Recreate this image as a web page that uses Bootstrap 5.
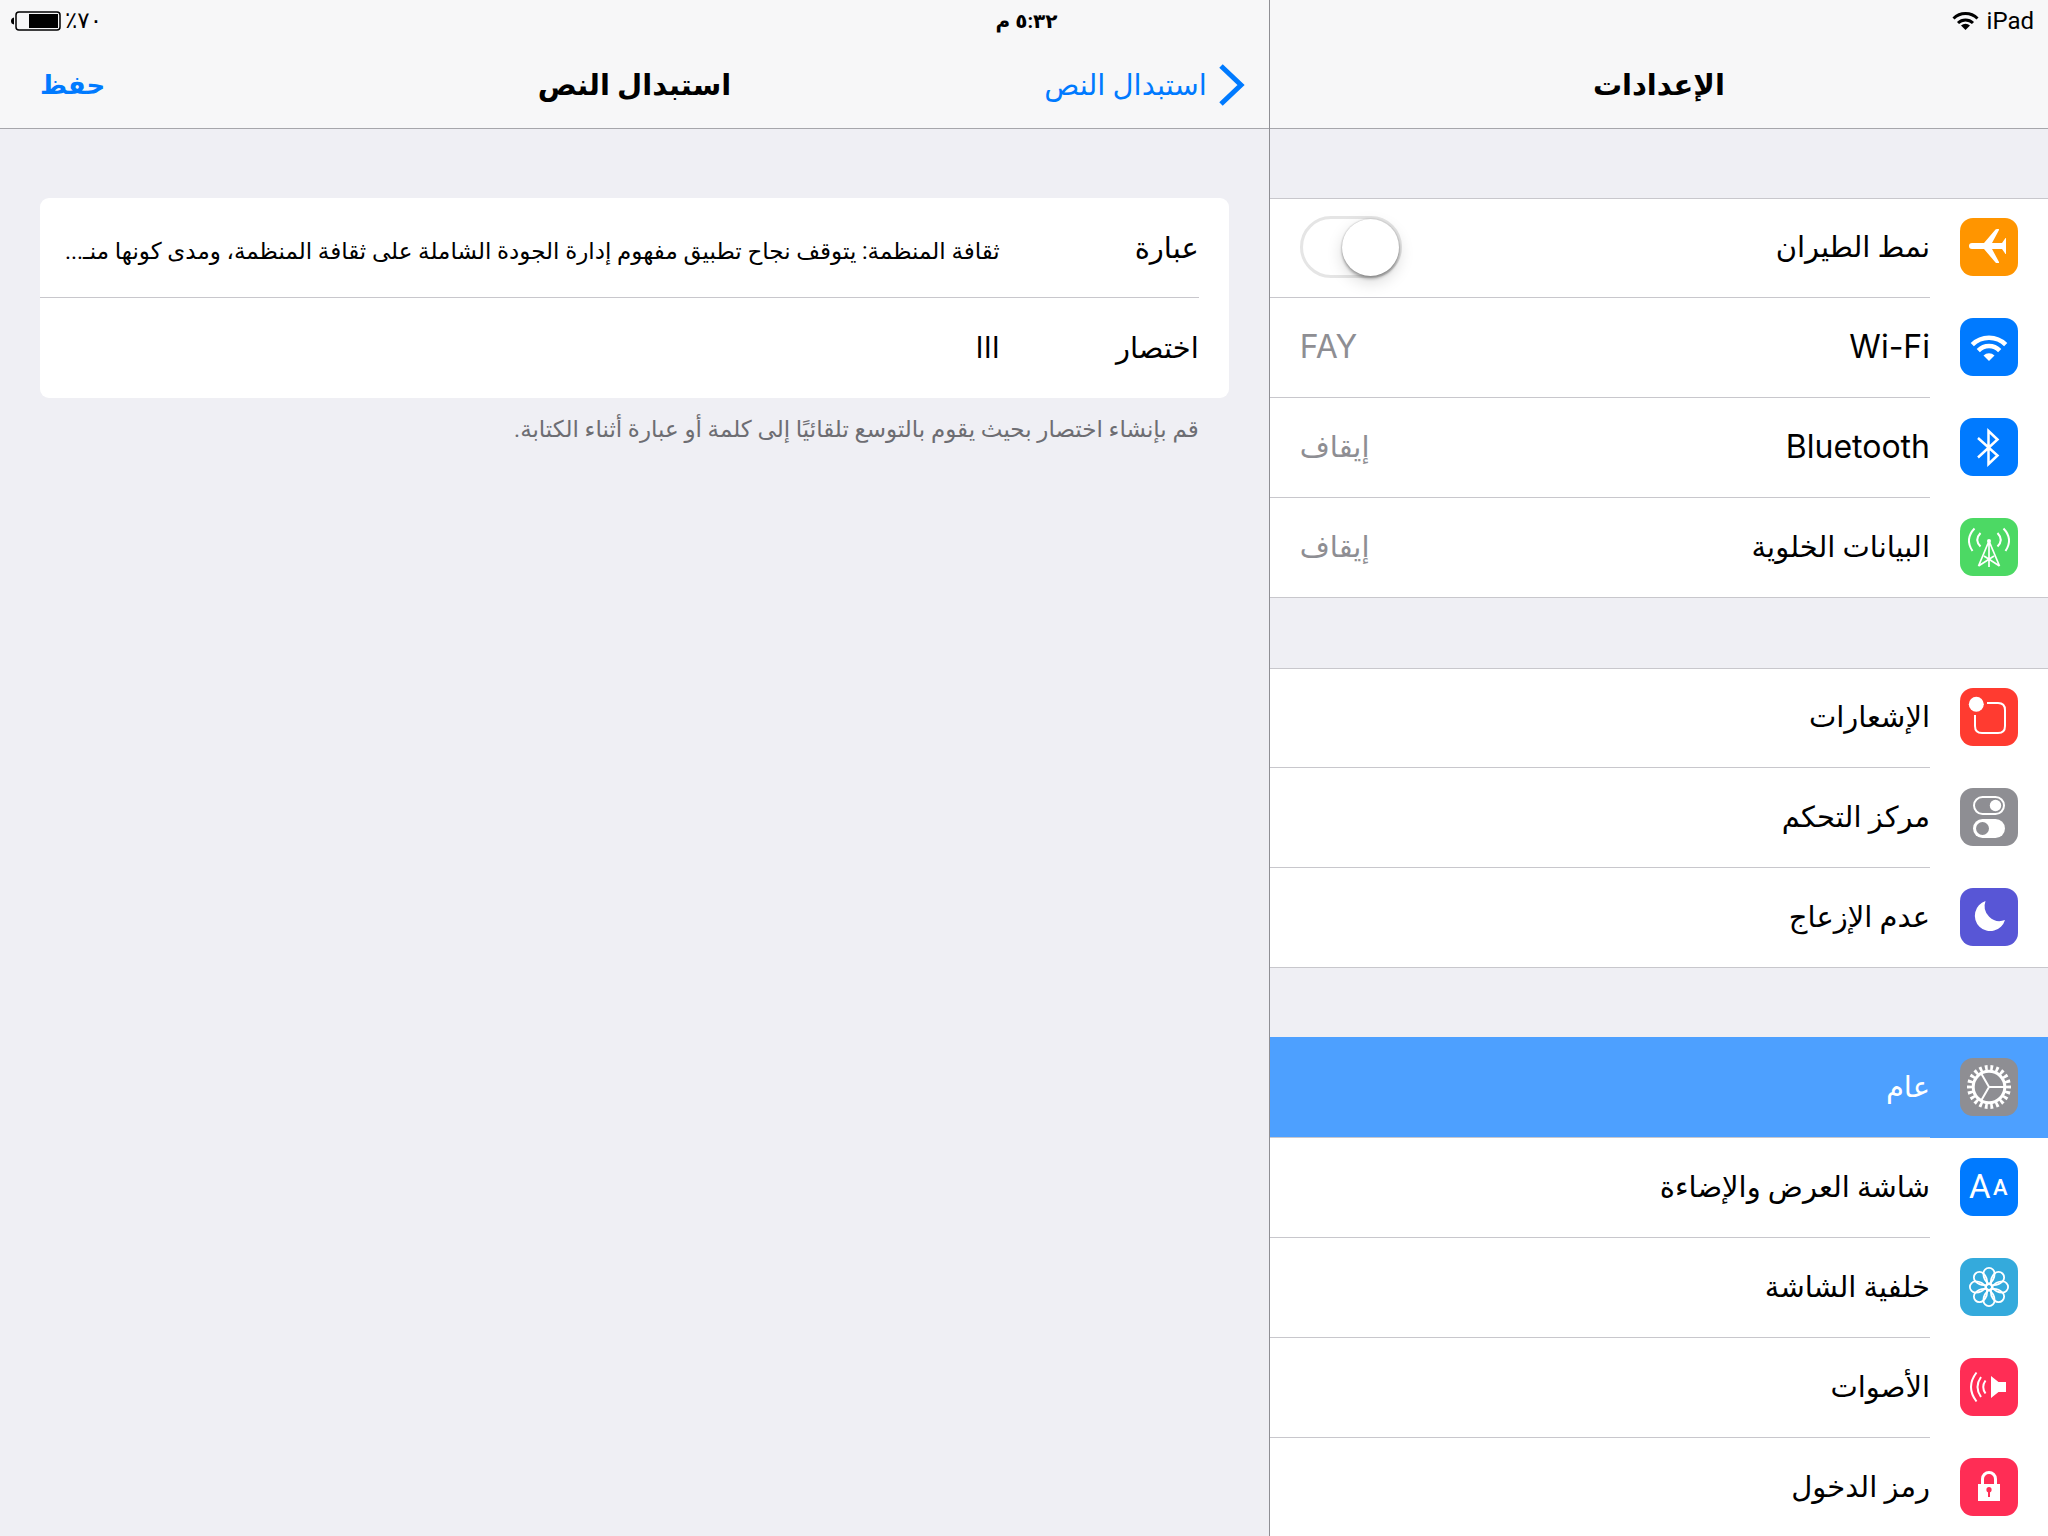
<!DOCTYPE html>
<html lang="ar" dir="rtl">
<head>
<meta charset="utf-8">
<meta name="viewport" content="width=device-width, initial-scale=1">
<title>استبدال النص</title>
<link href="https://cdn.jsdelivr.net/npm/bootstrap@5.3.0/dist/css/bootstrap.min.css" rel="stylesheet">
<style>
:root{--line:#c8c7cc;--tint:#007aff;--bar:#f7f7f8;--edge:#a6a6ab}
body{font-family:Roboto,"DejaVu Sans",sans-serif;font-size:29px;line-height:40px;color:#000;background:#efeff4}
a{text-decoration:none;color:inherit}
.latin{font-family:Inter,"DejaVu Sans",sans-serif;font-size:32px}
.status-bar{height:42px;padding:0 14px 0 11px;font-size:23px;line-height:42px;z-index:5;pointer-events:none}
.status-bar strong{font-size:20px;padding-left:8px}
.status-bar .carrier{font-size:24px}
.status-bar .part{flex:1 1 0}
.sidebar{flex:0 0 38%;min-width:0}
.detail{min-width:0;border-right:1px solid #8f8f94}
.top-bar{height:129px;flex:none;padding:46px 24px 4px;background:var(--bar);border-bottom:1px solid var(--edge)}
.top-bar h1{font-size:29px;line-height:40px;font-weight:700}
.top-bar .side{flex:1 1 0;color:var(--tint)}
.top-bar .side a{gap:12px}
.top-bar .btn{color:var(--tint);font-size:26px;line-height:40px}
.save{padding:0 16px!important}
.scroller{overflow-y:auto;scrollbar-width:none;padding-top:69px}
.scroller::-webkit-scrollbar{display:none}
.group{background:#fff;border-bottom:1px solid var(--line);margin-bottom:70px;box-shadow:inset 0 1px var(--line)}
.setting{height:100px;padding-right:30px;gap:30px}
.setting:last-child{height:99px}
.tile{width:58px;height:58px;margin-top:20px;border-radius:13px;flex:none}
.tile svg{display:block}
.body-cell{padding:0 0 1px 30px;border-bottom:1px solid var(--line)}
.setting:last-child .body-cell{border-bottom:0}
.value{color:#8e8e93}
.chosen{background:#4da0ff;color:#fff;box-shadow:0 -1px #4da0ff}
.form-check-input.flip{width:102px;height:62px;margin:0;border:3px solid #e5e5e5;border-radius:31px;background:#fff;display:flex;flex:none}
.flip::before{content:"";width:57px;height:57px;border-radius:50%;background:#fff;box-shadow:0 0 2px rgba(0,0,0,.3),0 3px 3px rgba(0,0,0,.25),0 6px 16px rgba(0,0,0,.15)}
.form-wrap{padding:69px 40px 0}
.sheet{background:#fff;border-radius:9px;padding-right:30px}
.field{height:100px}
.field + .field{box-shadow:0 -1px var(--line)}
.field label{width:199px;flex:none}
.field input{border:0;outline:0;background:none;padding:0 0 0 20px;min-width:0;color:#000;font-size:29px;line-height:40px;text-overflow:ellipsis}
.field .long-text{font-size:23px;padding-top:8px}
.hint{font-size:23px;line-height:32px;color:#6d6d72;padding:16px 30px}
</style>
</head>
<body>
<div class="vh-100 d-flex overflow-hidden position-relative">
  <div class="status-bar d-flex align-items-center position-absolute top-0 start-0 end-0">
    <div class="part d-flex align-items-center gap-2 carrier"><span>iPad</span>
      <svg width="27" height="20" viewBox="0 0 27 20" fill="none" stroke="#000" stroke-width="3"><path d="M1.5 7.500A17 17 0 0 1 25.500 7.500M6 12A11 11 0 0 1 21 12"/><path d="M13.500 19 9 14.500A7 7 0 0 1 18 14.500Z" fill="#000" stroke="none"/></svg></div>
    <strong>٥:٣٢ م</strong>
    <div class="part d-flex align-items-center justify-content-end gap-1"><span dir="ltr">٪٧٠</span>
      <svg width="50" height="20" viewBox="0 0 50 20"><rect x="5" y="1" width="44" height="18" rx="3" fill="none" stroke="#000" stroke-width="1.500"/><path d="M3 6.500V13.500Q0 13 0 10T3 6.500Z"/><rect x="18" y="3" width="29" height="14"/></svg></div>
  </div>

  <aside class="sidebar d-flex flex-column">
    <header class="top-bar d-flex align-items-center justify-content-center"><h1 class="m-0">الإعدادات</h1></header>
    <nav class="scroller flex-fill">
      <div class="group">
        <div class="setting d-flex"><span class="tile" style="background:#ff9500"><svg width="58" height="58" fill="#fff"><path d="M12 25H24L35.500 11.500Q36 11 37 11H38.500Q39.300 11 39 12L32 25H42L45.500 20H46V36H45.500L42 31H32L39 44Q39.300 45 38.500 45H37Q36 45 35.500 44.500L24 31H12A3 3 0 0 1 12 25Z"/></svg></span>
          <div class="body-cell flex-fill d-flex align-items-center justify-content-between"><label for="air">نمط الطيران</label><input class="form-check-input flip" type="checkbox" role="switch" id="air"></div></div>
        <a href="#" class="setting d-flex"><span class="tile" style="background:#007aff"><svg width="58" height="58" fill="none" stroke="#fff" stroke-width="4.500"><path d="M12.300 26.600A23.700 23.700 0 0 1 45.700 26.600M18.300 32.600A15 15 0 0 1 39.700 32.600"/><path d="M29 43 23.500 37.500A8 8 0 0 1 34.500 37.500Z" fill="#fff" stroke="none"/></svg></span>
          <div class="body-cell latin flex-fill d-flex align-items-center justify-content-between"><span>Wi-Fi</span><span class="value">FAY</span></div></a>
        <a href="#" class="setting d-flex"><span class="tile" style="background:#007aff"><svg width="58" height="58" fill="none" stroke="#fff" stroke-width="2.500"><path d="M18 20 37.500 37.500 28.500 46V13L37.500 21.500 18 39.500"/></svg></span>
          <div class="body-cell flex-fill d-flex align-items-center justify-content-between"><span class="latin">Bluetooth</span><span class="value">إيقاف</span></div></a>
        <a href="#" class="setting d-flex"><span class="tile" style="background:#4cd964"><svg width="58" height="58" fill="none" stroke="#fff" stroke-width="1.700"><circle cx="29" cy="23" r="2" fill="#fff" stroke="none"/><path d="M29 23 18.500 48M29 23 39.500 48M29 23V49M18.500 48 34 38M39.500 48 24 38"/><path stroke-width="2" d="M14.500 10.500Q4.500 21 12.500 33M20.500 15Q14 22 20.500 28.500M43.500 10.500Q53.500 21 45.500 33M37.500 15Q44 22 37.500 28.500"/></svg></span>
          <div class="body-cell flex-fill d-flex align-items-center justify-content-between"><span>البيانات الخلوية</span><span class="value">إيقاف</span></div></a>
      </div>
      <div class="group">
        <a href="#" class="setting d-flex"><span class="tile" style="background:#ff3b30"><svg width="58" height="58" fill="none" stroke="#fff" stroke-width="2"><circle cx="16.300" cy="16.300" r="7.500" fill="#fff" stroke="none"/><path d="M27 15H38Q45 15 45 22V38Q45 45 38 45H22Q15 45 15 38V27"/></svg></span>
          <div class="body-cell flex-fill d-flex align-items-center">الإشعارات</div></a>
        <a href="#" class="setting d-flex"><span class="tile" style="background:#8e8e93"><svg width="58" height="58" fill="#fff"><rect x="14" y="9" width="30" height="17" rx="8.500" fill="none" stroke="#fff" stroke-width="2"/><circle cx="35.500" cy="17.500" r="5.700"/><rect x="13" y="31" width="32" height="19" rx="9.500"/><circle cx="22.500" cy="40.500" r="6.500" fill="#8e8e93"/></svg></span>
          <div class="body-cell flex-fill d-flex align-items-center">مركز التحكم</div></a>
        <a href="#" class="setting d-flex"><span class="tile" style="background:#5856d6"><svg width="58" height="58" fill="#fff"><path d="M25.500 13A15.400 15.400 0 1 0 45 32A15 15 0 0 1 25.500 13Z"/></svg></span>
          <div class="body-cell flex-fill d-flex align-items-center">عدم الإزعاج</div></a>
      </div>
      <div class="group">
        <a href="#" class="setting chosen d-flex" aria-current="page"><span class="tile" style="background:#8e8e93"><svg width="58" height="58" fill="none" stroke="#fff"><circle cx="29" cy="29" r="15.800" stroke-width="3"/><circle cx="29" cy="29" r="19.300" stroke-width="5.400" pathLength="22" stroke-dasharray=".5 .5" stroke-dashoffset=".25"/><path stroke-width="2" d="M29 29H44M29 29 21.500 16M29 29 21.500 42"/></svg></span>
          <div class="body-cell flex-fill d-flex align-items-center">عام</div></a>
        <a href="#" class="setting d-flex"><span class="tile" style="background:#007aff"><svg width="58" height="58" fill="#fff" direction="ltr" font-family="Roboto, sans-serif"><text x="9" y="40" font-size="33" font-weight="400">A</text><text x="33" y="37" font-size="22" font-weight="500">A</text></svg></span>
          <div class="body-cell flex-fill d-flex align-items-center">شاشة العرض والإضاءة</div></a>
        <a href="#" class="setting d-flex"><span class="tile" style="background:#34aadc"><svg width="58" height="58" fill="none" stroke="#fff" stroke-width="1.800"><defs><path id="petal" d="M0-3C-3-5-5.600-8-5.600-13.500A5.600 5.600 0 1 1 5.600-13.500C5.600-8 3-5 0-3Z"/></defs><g transform="translate(29 29)"><circle r="3"/><use href="#petal"/><use href="#petal" transform="rotate(45)"/><use href="#petal" transform="rotate(90)"/><use href="#petal" transform="rotate(135)"/><use href="#petal" transform="rotate(180)"/><use href="#petal" transform="rotate(225)"/><use href="#petal" transform="rotate(270)"/><use href="#petal" transform="rotate(315)"/></g></svg></span>
          <div class="body-cell flex-fill d-flex align-items-center">خلفية الشاشة</div></a>
        <a href="#" class="setting d-flex"><span class="tile" style="background:#ff2d55"><svg width="58" height="58" fill="none" stroke="#fff" stroke-width="2"><path d="M31 18 38.500 24H46V34H38.500L31 40Z" fill="#fff" stroke="none"/><path d="M16.500 14.500Q5.500 29 16.500 43.500M21 19Q14 29 21 39M25.500 22.500Q21 29 25.500 35.500"/></svg></span>
          <div class="body-cell flex-fill d-flex align-items-center">الأصوات</div></a>
        <a href="#" class="setting d-flex"><span class="tile" style="background:#ff2d55"><svg width="58" height="58" fill="#fff"><path d="M18 26H40V43H18Z"/><path d="M22.500 27V21A6.500 6.500 0 0 1 35.500 21V27" fill="none" stroke="#fff" stroke-width="3"/><circle cx="29" cy="31.700" r="2.600" fill="#ff2d55"/><path d="M28 32H30V39H28Z" fill="#ff2d55"/></svg></span>
          <div class="body-cell flex-fill d-flex align-items-center">رمز الدخول</div></a>
      </div>
    </nav>
  </aside>

  <main class="detail flex-fill d-flex flex-column">
    <header class="top-bar d-flex align-items-center">
      <div class="side d-flex"><a href="#" class="d-flex align-items-center"><svg width="26" height="42" viewBox="0 0 26 42" fill="none" stroke="currentColor" stroke-width="5"><path d="M2 2 22 21 2 40"/></svg><span>استبدال النص</span></a></div>
      <h1 class="m-0">استبدال النص</h1>
      <div class="side d-flex justify-content-end"><button type="button" class="btn save border-0 fw-bold">حفظ</button></div>
    </header>
    <form class="form-wrap">
      <div class="sheet">
        <div class="field d-flex align-items-center"><label for="phrase">عبارة</label><input id="phrase" class="long-text flex-fill" type="text" value="ثقافة المنظمة: يتوقف نجاح تطبيق مفهوم إدارة الجودة الشاملة على ثقافة المنظمة، ومدى كونها منـ..."></div>
        <div class="field d-flex align-items-center"><label for="shortcut">اختصار</label><input id="shortcut" class="flex-fill" type="text" value="ااا"></div>
      </div>
      <p class="hint m-0">قم بإنشاء اختصار بحيث يقوم بالتوسع تلقائيًا إلى كلمة أو عبارة أثناء الكتابة.</p>
    </form>
  </main>
</div>
<script src="https://cdn.jsdelivr.net/npm/bootstrap@5.3.0/dist/js/bootstrap.bundle.min.js"></script>
</body>
</html>
